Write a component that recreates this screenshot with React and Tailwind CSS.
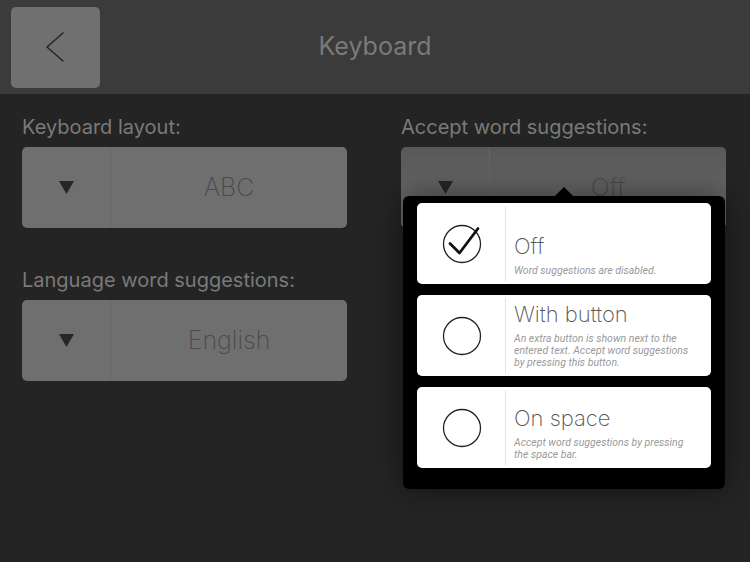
const options = [
  {
    title: "Off",
    desc: "Word suggestions are disabled.",
    checked: true,
  },
  {
    title: "With button",
    desc: "An extra button is shown next to the entered text. Accept word suggestions by pressing this button.",
    checked: false,
  },
  {
    title: "On space",
    desc: "Accept word suggestions by pressing the space bar.",
    checked: false,
  },
];

function Triangle() {
  return (
    <svg width="15" height="13" viewBox="0 0 15 13">
      <polygon points="0,0 15,0 7.5,13" fill="#262626" />
    </svg>
  );
}

function BackChevron() {
  return (
    <svg width="20" height="32" viewBox="0 0 20 32">
      <polyline
        points="18,2 2,16 18,30"
        fill="none"
        stroke="#262626"
        strokeWidth="1.6"
        strokeLinecap="round"
        strokeLinejoin="round"
      />
    </svg>
  );
}

function Select({ value, shaded }) {
  return (
    <div
      className={`flex h-[81px] w-full rounded-[5px] ${
        shaded ? "bg-gradient-to-b from-[#585858] to-[#6f6f6f]" : "bg-[#6f6f6f]"
      }`}
    >
      <div className="flex w-[89px] items-center justify-center border-r border-[#666]">
        <Triangle />
      </div>
      <div className="flex flex-1 items-center justify-center text-[25px] font-extralight text-[#4a4a4a]">
        {value}
      </div>
    </div>
  );
}

function Field({ label, value, shaded }) {
  return (
    <div className="flex flex-col">
      <p className="mb-[6px] pt-[2px] text-[20px] leading-[28px] text-[#7a7a7a]">{label}</p>
      <Select value={value} shaded={shaded} />
    </div>
  );
}

function RadioMark({ checked }) {
  return (
    <svg width="44" height="44" viewBox="0 0 44 44">
      <circle cx="20" cy="22" r="18.5" fill="none" stroke="#222" strokeWidth="1.3" />
      {checked && (
        <path
          d="M8 21.5 L17.5 31 L36 6.5"
          fill="none"
          stroke="#111"
          strokeWidth="2.8"
          strokeLinecap="round"
          strokeLinejoin="round"
        />
      )}
    </svg>
  );
}

function OptionCard({ title, desc, checked }) {
  return (
    <div className="flex h-[81px] rounded-[5px] bg-white">
      <div className="my-[3px] flex w-[89px] items-center justify-center border-r border-[#e2e2e2] pl-[5px]">
        <RadioMark checked={checked} />
      </div>
      <div className="flex flex-1 flex-col justify-end pb-[7px] pl-[8px] pr-[12px]">
        <p className="text-[22px] font-extralight leading-[26px] text-[#555]">{title}</p>
        <p
          className="mt-[6px] text-[10.5px] italic leading-[12px] text-[#9a9a9a]"
          style={{ fontFamily: "Roboto, 'Liberation Sans', sans-serif" }}
        >
          {desc}
        </p>
      </div>
    </div>
  );
}

export default function App() {
  return (
    <div
      className="relative h-[562px] w-[750px] overflow-hidden bg-[#242424]"
      style={{ fontFamily: "Inter, 'Noto Sans', sans-serif" }}
    >
      {/* Header */}
      <div className="relative flex h-[94px] items-center bg-[#3b3b3b] px-[11px]">
        <button className="flex h-[81px] w-[89px] items-center justify-center rounded-[5px] bg-[#707070] pr-[2px]">
          <BackChevron />
        </button>
        <h1 className="pointer-events-none absolute left-0 right-0 text-center text-[25px] text-[#7a7a7a]">
          Keyboard
        </h1>
      </div>

      {/* Settings */}
      <div className="grid grid-cols-2 gap-x-[54px] gap-y-[36px] pl-[22px] pr-[24px] pt-[17px]">
        <Field label="Keyboard layout:" value="ABC" />
        <Field label="Accept word suggestions:" value="Off" shaded />
        <Field label="Language word suggestions:" value="English" />
      </div>

      {/* Popover */}
      <div className="absolute left-[403px] top-[196px] w-[322px] rounded-[6px] bg-black px-[14px] pb-[21px] pt-[7px] shadow-[0_0_30px_rgba(0,0,0,0.5)]">
        <div className="absolute left-[152px] top-[-9px] h-0 w-0 border-x-[9px] border-b-[9px] border-x-transparent border-b-black" />
        <div className="flex flex-col gap-[11px]">
          {options.map((o) => (
            <OptionCard key={o.title} {...o} />
          ))}
        </div>
      </div>
    </div>
  );
}
